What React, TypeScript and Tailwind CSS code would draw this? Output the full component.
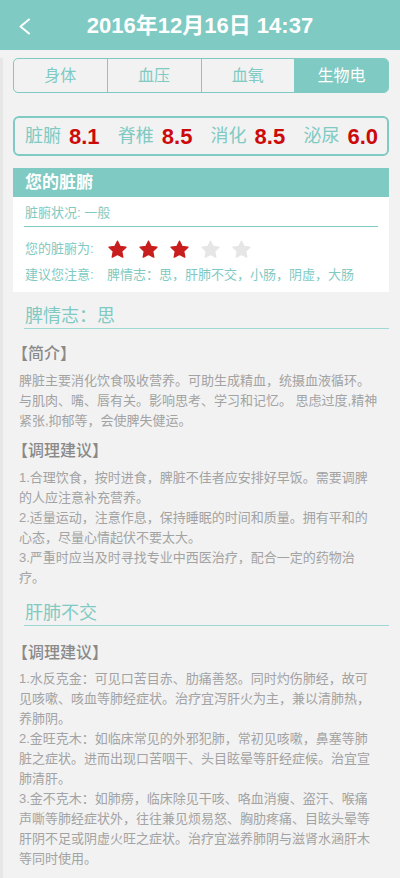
import React from 'react'

const tabs = ['身体', '血压', '血氧', '生物电']

const scores = [
  { label: '脏腑', value: '8.1' },
  { label: '脊椎', value: '8.5' },
  { label: '消化', value: '8.5' },
  { label: '泌尿', value: '6.0' },
]

const intro = [
  '脾脏主要消化饮食吸收营养。可助生成精血，统摄血液循环。',
  '与肌肉、嘴、唇有关。影响思考、学习和记忆。 思虑过度,精神',
  '紧张,抑郁等，会使脾失健运。',
]

const spleenAdvice = [
  '1.合理饮食，按时进食，脾脏不佳者应安排好早饭。需要调脾',
  '的人应注意补充营养。',
  '2.适量运动，注意作息，保持睡眠的时间和质量。拥有平和的',
  '心态，尽量心情起伏不要太大。',
  '3.严重时应当及时寻找专业中西医治疗，配合一定的药物治',
  '疗。',
]

const liverAdvice = [
  '1.水反克金：可见口苦目赤、肋痛善怒。同时灼伤肺经，故可',
  '见咳嗽、咳血等肺经症状。治疗宜泻肝火为主，兼以清肺热，',
  '养肺阴。',
  '2.金旺克木：如临床常见的外邪犯肺，常初见咳嗽，鼻塞等肺',
  '脏之症状。进而出现口苦咽干、头目眩晕等肝经症候。治宜宣',
  '肺清肝。',
  '3.金不克木：如肺痨，临床除见干咳、咯血消瘦、盗汗、喉痛',
  '声嘶等肺经症状外，往往兼见烦易怒、胸肋疼痛、目眩头晕等',
  '肝阴不足或阴虚火旺之症状。治疗宜滋养肺阴与滋肾水涵肝木',
  '等同时使用。',
]

function Star({ on }: { on: boolean }) {
  const c = on ? '#c81e1e' : '#e6e6e6'
  return (
    <svg width="21" height="21" viewBox="0 0 24 24">
      <polygon
        points="12,2.5 15,8.6 21.6,9.5 16.8,14.1 18,20.7 12,17.6 6,20.7 7.2,14.1 2.4,9.5 9,8.6"
        fill={c}
        stroke={c}
        strokeWidth="1.6"
        strokeLinejoin="round"
      />
    </svg>
  )
}

function Lines({ lines }: { lines: string[] }) {
  return (
    <div className="text-[13px] leading-[20px] text-[#a3a3a3]">
      {lines.map((l, i) => (
        <div key={i} className="whitespace-nowrap">{l}</div>
      ))}
    </div>
  )
}

function SubHead({ children }: { children: React.ReactNode }) {
  return <div className="-ml-[7px] h-[24px] text-[16px] leading-[24px] text-[#8a8a8a] font-medium">{children}</div>
}

function SectionTitle({ children }: { children: React.ReactNode }) {
  return (
    <div className="ml-[21px] mr-[11px] border-b border-[#9fd9d3]">
      <div className="h-[24px] pl-px text-[18px] leading-[24px] text-[#7fcac3]">{children}</div>
    </div>
  )
}

export default function App() {
  return (
    <div className="h-[878px] overflow-hidden bg-[#f2f2f2] font-['Liberation_Sans','Noto_Sans_CJK_SC',sans-serif]">
      {/* top bar */}
      <header className="relative h-[50px] bg-[#7fcac3] flex items-center justify-center">
        <svg className="absolute left-[18px] top-[18px]" width="13" height="17" viewBox="0 0 13 17">
          <polyline points="11,1.5 2.5,8.5 11,15.5" fill="none" stroke="#fff" strokeWidth="2" strokeLinecap="round" strokeLinejoin="round" />
        </svg>
        <h1 className="text-[22px] font-bold text-white">2016年12月16日 14:37</h1>
      </header>

      <main className="border-l-[3px] border-[#e6e6e6] h-[828px]">
        {/* tabs */}
        <div className="mt-[8px] ml-[10px] mr-[11px] h-[35px] flex border border-[#7fcac3] rounded-[5px] overflow-hidden">
          {tabs.map((t, i) => (
            <div
              key={t}
              className={
                'flex-1 flex items-center justify-center text-[16px] ' +
                (i === 3 ? 'bg-[#7fcac3] text-white' : 'text-[#7fcac3] border-r border-[#7fcac3]')
              }
            >
              {t}
            </div>
          ))}
        </div>

        {/* scores */}
        <div className="mt-[23px] ml-[10px] mr-[11px] h-[40px] border-2 border-[#7fcac3] rounded-[6px] flex items-center justify-between pl-[10px] pr-[9px]">
          {scores.map((s) => (
            <div key={s.label} className="flex items-center gap-[8px]">
              <span className="text-[18px] text-[#7fcac3]">{s.label}</span>
              <span className="text-[22px] font-bold text-[#cc0a0a]">{s.value}</span>
            </div>
          ))}
        </div>

        {/* summary card */}
        <div className="mt-[12px] ml-[10px] mr-[11px] bg-white">
          <div className="h-[29px] bg-[#7fcac3] pl-[12px] flex items-center text-[17px] font-semibold text-white">您的脏腑</div>
          <div className="pt-[6px] pb-[7px] text-[13px] text-[#7fcac3]">
            <div className="h-[20px] leading-[20px] pl-[12px]">脏腑状况: 一般</div>
            <div className="mt-[3px] mx-[11px] h-px bg-[#7fcac3]" />
            <div className="mt-[12px] h-[20px] flex items-center pl-[12px]">
              <span className="w-[82px]">您的脏腑为:</span>
              <div className="flex gap-[10px]">
                {[0, 1, 2, 3, 4].map((i) => (
                  <Star key={i} on={i < 3} />
                ))}
              </div>
            </div>
            <div className="mt-[6px] h-[20px] leading-[20px] flex pl-[12px]">
              <span className="w-[82px]">建议您注意:</span>
              <span>脾情志：思，肝肺不交，小肠，阴虚，大肠</span>
            </div>
          </div>
        </div>

        {/* spleen */}
        <section className="mt-[12px]">
          <SectionTitle>脾情志：思</SectionTitle>
          <div className="pl-[16px] pt-[13px]">
            <SubHead>【简介】</SubHead>
            <div className="mt-[5px]"><Lines lines={intro} /></div>
            <div className="mt-[8px]"><SubHead>【调理建议】</SubHead></div>
            <div className="mt-[5px]"><Lines lines={spleenAdvice} /></div>
          </div>
        </section>

        {/* liver-lung */}
        <section className="mt-[13px]">
          <SectionTitle>肝肺不交</SectionTitle>
          <div className="pl-[16px] pt-[15px]">
            <SubHead>【调理建议】</SubHead>
            <div className="mt-[4px]"><Lines lines={liverAdvice} /></div>
          </div>
        </section>
      </main>
    </div>
  )
}
